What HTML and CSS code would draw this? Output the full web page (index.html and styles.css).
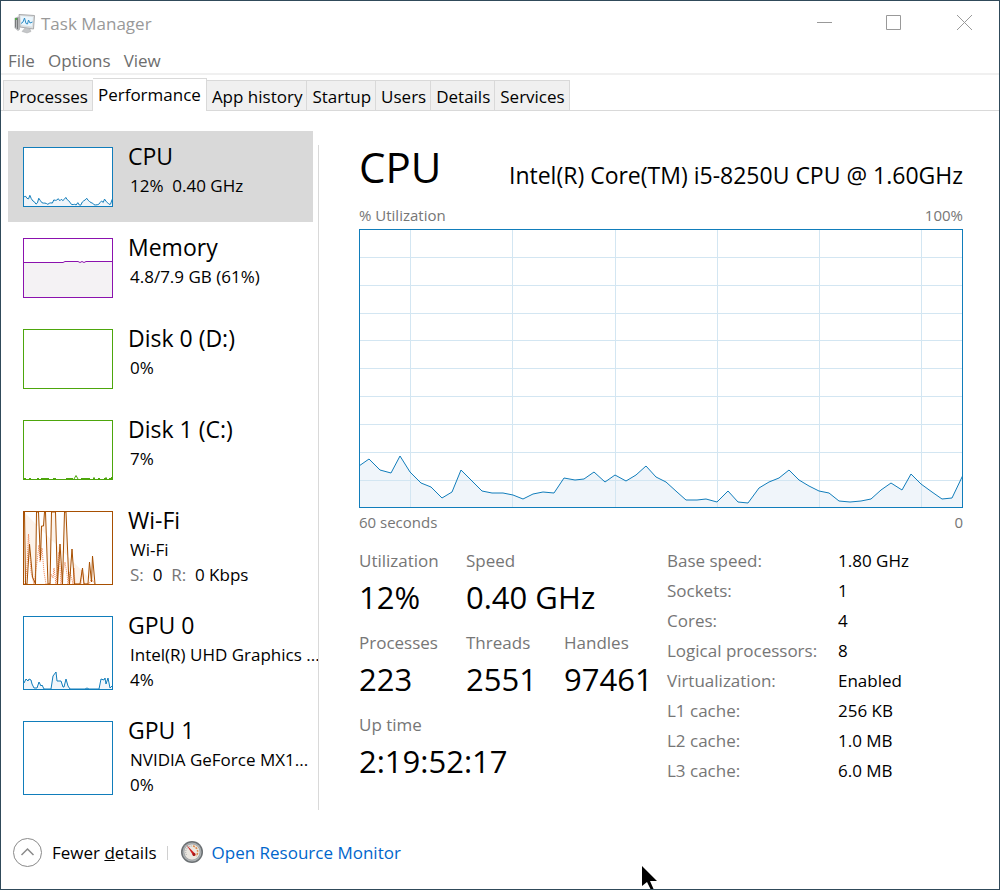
FILE: index.html
```html
<!DOCTYPE html>
<html lang="en">
<head>
<meta charset="UTF-8">
<meta name="viewport" content="width=device-width, initial-scale=1.0">
<title>Task Manager</title>
<link rel="stylesheet" href="styles.css">
</head>
<body>

<div class="window">

<header class="titlebar">
  <svg class="app-icon" width="22" height="20" viewBox="0 0 22 20">
    <path d="M0.500 4L4 2.500L6 3.500V15.500L4 17L0.500 14Z" fill="#b5b7b9"/>
    <path d="M1.500 4.500V13.500M3.500 4V15" stroke="#77797b" stroke-width="1"/>
    <rect x="1" y="4" width="2" height="2" fill="#57a84f"/>
    <path d="M5 0.500L20.500 1.500L19.500 15L6 13Z" fill="#dcdedf" stroke="#a9abad"/>
    <path d="M6.500 2L19 3L18 12.500L7.500 11Z" fill="#eaf6fd"/>
    <path d="M7 9.500L9 8L10.500 4L12 9.500L13.500 10L14.500 6L16 9L18.500 8" fill="none" stroke="#2d8cc6"/>
    <path d="M11 14L16 15L17 17.500L13 19L8 17.500Z" fill="#c4c6c8" stroke="#a9abad" stroke-width="0.500"/>
  </svg>
  <h1 class="title">Task Manager</h1>
  <div class="window-buttons">
    <button class="window-button" aria-label="Minimize"><svg width="17" height="17" viewBox="0 0 17 17"><path d="M1 7.500H16"/></svg></button>
    <button class="window-button" aria-label="Maximize"><svg width="17" height="17" viewBox="0 0 17 17"><path d="M0.500 0.500H14.500V14.500H0.500Z"/></svg></button>
    <button class="window-button" aria-label="Close"><svg width="17" height="17" viewBox="0 0 17 17"><path d="M1 0L16 15M16 0L1 15"/></svg></button>
  </div>
</header>

<nav class="menu">
  <button>File</button>
  <button>Options</button>
  <button>View</button>
</nav>

<div class="tabs" role="tablist">
  <button class="tab" role="tab">Processes</button>
  <button class="tab active" role="tab" aria-selected="true">Performance</button>
  <button class="tab" role="tab">App history</button>
  <button class="tab" role="tab">Startup</button>
  <button class="tab" role="tab">Users</button>
  <button class="tab" role="tab">Details</button>
  <button class="tab" role="tab">Services</button>
</div>

<div class="content">

<div class="sidebar">
  <button class="item selected">
    <svg class="thumb blue" viewBox="1 1 602 277" preserveAspectRatio="none">
      <use href="#cpu-area"/>
      <use href="#cpu-line"/>
    </svg>
    <span class="info">
      <span class="name">CPU</span>
      <span class="sub">12%&nbsp; 0.40 GHz</span>
    </span>
  </button>

  <button class="item">
    <svg class="thumb purple" viewBox="0 0 88 58" preserveAspectRatio="none">
      <path class="area" d="M0 23.500H39L41 22.500H54L56 23.500L58 22.500L60 23.500L62 22.500H88V58H0Z"/>
      <path class="line" d="M0 23.500H39L41 22.500H54L56 23.500L58 22.500L60 23.500L62 22.500H88"/>
    </svg>
    <span class="info">
      <span class="name">Memory</span>
      <span class="sub">4.8/7.9 GB (61%)</span>
    </span>
  </button>

  <button class="item">
    <svg class="thumb green" viewBox="0 0 88 58" preserveAspectRatio="none"></svg>
    <span class="info">
      <span class="name">Disk 0 (D:)</span>
      <span class="sub">0%</span>
    </span>
  </button>

  <button class="item">
    <svg class="thumb green" viewBox="0 0 88 58" preserveAspectRatio="none">
      <path class="line" d="M0 57.500H2M5 57.500H7M13 57.500H15M17 57.500H25M29 57.500H32M42 57.500H49M50 58L52 54.500L54 58M57 57.500H66M69 57.500H71M70 58V56M74 57.500H76M80 57.500H83M82 58V56M85 57.500H88M87.500 58V56"/>
    </svg>
    <span class="info">
      <span class="name">Disk 1 (C:)</span>
      <span class="sub">7%</span>
    </span>
  </button>

  <button class="item">
    <svg class="thumb tall brown" viewBox="0 0 88 72" preserveAspectRatio="none">
      <path class="area" d="M0 0L1 72H3L6 32L8 65L11 72L13 0H14L16 48L18 14H19L20 0H21L24 72H26L28 0H31L33 72L36 32L38 72L40 0H42L44 61L45 72L48 37L50 72H56L58 56L60 72H64L65 50L67 70L68 44L71 72Z"/>
      <path class="dotted" d="M1 72L3 55L4.500 22L7 60L10 72L13 50L15 33L16 50L18 36L20 60L22 72H26L27 62L29 66L30 56L32 72L35 40L37 72L39 60L41 50L43 62L44 72L46 60L49 72L50 56L51 72H57L58 58L60 72H65L67 68L69 69L71 72"/>
      <path class="line" d="M0.500 0L1.500 72H3L5.500 32L8.500 65L11.500 72L12.500 0H14.500L16.500 48L17.500 14H19.500L20.500 0H21.500L24 72H26L27.500 0H31.500L33.500 72L36 32L38.500 72L40.500 0H42L44.500 61L45.500 72L48 37L50.500 72H56L58.500 56L60 72H64L65.500 50L67.500 70L68.500 44L71 72"/>
    </svg>
    <span class="info">
      <span class="name">Wi-Fi</span>
      <span class="sub">Wi-Fi</span>
      <span class="sub"><span class="muted">S:</span>&nbsp; 0&nbsp; <span class="muted">R:</span>&nbsp; 0 Kbps</span>
    </span>
  </button>

  <button class="item">
    <svg class="thumb tall blue" viewBox="0 0 88 72" preserveAspectRatio="none">
      <path class="area" d="M0 66L2 62L7 63L10 71L13 71L15 65L17 69L20 72H27L29 59L32 55L33 64L37 64L39 70H40L42 62L44 69L46 72H61L63 71L65 72H75L77 62L80 63L81 61L82 67L84 61L86 71L88 69V72H0Z"/>
      <path class="line" d="M0 66L2 62L4 64L5 62L7 63L8 67L10 71L13 71L15 65L17 69L18 68L20 72H27L29 59L32 55L33 64L37 64L39 70H40L42 62L44 69L46 72H61L63 71L65 72H75L77 62L80 63L81 61L82 67L84 61L86 71L88 69"/>
    </svg>
    <span class="info">
      <span class="name">GPU 0</span>
      <span class="sub">Intel(R) UHD Graphics ...</span>
      <span class="sub">4%</span>
    </span>
  </button>

  <button class="item">
    <svg class="thumb tall blue" viewBox="0 0 88 72" preserveAspectRatio="none"></svg>
    <span class="info">
      <span class="name">GPU 1</span>
      <span class="sub">NVIDIA GeForce MX1...</span>
      <span class="sub">0%</span>
    </span>
  </button>
</div>

<main class="detail">
  <div class="heading">
    <h2>CPU</h2>
    <p>Intel(R) Core(TM) i5-8250U CPU @ 1.60GHz</p>
  </div>

  <div class="axis"><span>% Utilization</span><span>100%</span></div>
  <svg class="chart blue" viewBox="1 1 602 277" preserveAspectRatio="none">
    <path id="cpu-area" class="area" d="M0 237L10 230L21 241L32 244L41 227L51 243L62 254L72 258L83 269L93 263L102 241L113 252L123 262L133 264L144 264L154 266L164 270L174 265L184 263L195 264L205 249L216 251L225 250L235 243L246 253L256 246L267 252L277 246L287 237L297 248L307 253L318 263L327 271L338 271L347 270L358 273L369 262L379 273L389 274L400 259L410 253L420 249L430 241L440 251L450 257L460 262L470 264L480 272L491 273L502 272L512 270L522 261L532 254L543 261L552 245L562 255L573 263L583 270L593 269L604 246V279H0Z"/>
    <path class="grid" d="M51.500 0V279M153.500 0V279M256.500 0V279M358.500 0V279M460.500 0V279M562.500 0V279"/>
    <path class="grid" d="M0 28.500H604M0 56.500H604M0 84.500H604M0 111.500H604M0 139.500H604M0 167.500H604M0 195.500H604M0 223.500H604M0 251.500H604"/>
    <path id="cpu-line" class="line" d="M0 237L10 230L21 241L32 244L41 227L51 243L62 254L72 258L83 269L93 263L102 241L113 252L123 262L133 264L144 264L154 266L164 270L174 265L184 263L195 264L205 249L216 251L225 250L235 243L246 253L256 246L267 252L277 246L287 237L297 248L307 253L318 263L327 271L338 271L347 270L358 273L369 262L379 273L389 274L400 259L410 253L420 249L430 241L440 251L450 257L460 262L470 264L480 272L491 273L502 272L512 270L522 261L532 254L543 261L552 245L562 255L573 263L583 270L593 269L604 246"/>
  </svg>
  <div class="axis"><span>60 seconds</span><span>0</span></div>

  <div class="stats">
    <dl class="counters">
      <div><dt>Utilization</dt><dd>12%</dd></div>
      <div class="wide"><dt>Speed</dt><dd>0.40 GHz</dd></div>
      <div><dt>Processes</dt><dd>223</dd></div>
      <div><dt>Threads</dt><dd>2551</dd></div>
      <div><dt>Handles</dt><dd>97461</dd></div>
      <div class="full"><dt>Up time</dt><dd>2:19:52:17</dd></div>
    </dl>
    <dl class="specs">
      <dt>Base speed:</dt><dd>1.80 GHz</dd>
      <dt>Sockets:</dt><dd>1</dd>
      <dt>Cores:</dt><dd>4</dd>
      <dt>Logical processors:</dt><dd>8</dd>
      <dt>Virtualization:</dt><dd>Enabled</dd>
      <dt>L1 cache:</dt><dd>256 KB</dd>
      <dt>L2 cache:</dt><dd>1.0 MB</dd>
      <dt>L3 cache:</dt><dd>6.0 MB</dd>
    </dl>
  </div>
</main>

</div>

<footer class="footer">
  <button class="fewer">
    <svg width="30" height="30" viewBox="0 0 30 30" fill="none" stroke="#8a8a8a">
      <circle cx="15.500" cy="14.500" r="14"/>
      <path d="M9.500 17L15.500 11L21.500 17" stroke-width="1.500"/>
    </svg>
    <span>Fewer <u>d</u>etails</span>
  </button>
  <a class="monitor" href="#">
    <svg width="24" height="24" viewBox="0 0 24 24">
      <circle cx="12" cy="11" r="11" fill="#6b7073"/>
      <circle cx="12" cy="11" r="9.500" fill="#aeb3b5"/>
      <circle cx="12" cy="11" r="8" fill="#ebe7e0" stroke="#83878a" stroke-width="0.500"/>
      <path d="M6.500 14A6 6 0 0 1 12 5" fill="none" stroke="#9aa0a3" stroke-dasharray="1 1"/>
      <path d="M13 5A6 6 0 0 1 16 15" fill="none" stroke="#e08a4a" stroke-width="1.500" stroke-dasharray="2 1"/>
      <path d="M6.500 4L15.500 13L13.500 15Z" fill="#cf1f1f"/>
      <circle cx="14" cy="13.500" r="1.500" fill="#a81616"/>
    </svg>
    <span>Open Resource Monitor</span>
  </a>
</footer>

<svg class="pointer" width="17" height="24" viewBox="0 0 17 24">
  <path d="M1 0V20L6 16L10 24H13L9 15H16Z" fill="#000"/>
</svg>

</div>

</body>
</html>
```

FILE: styles.css
```css
* {
  box-sizing: border-box;
}

body {
  margin: 0;
  font-family: "Segoe UI", "Open Sans", sans-serif;
  font-size: 17px;
  line-height: 24px;
  color: #000;
  background-color: #fff;
}

h1, h2, p, dl, dd {
  margin: 0;
  font-weight: normal;
}

button {
  padding: 0;
  border: none;
  background: none;
  color: inherit;
  font: inherit;
  text-align: left;
  white-space: nowrap;
}

.window {
  position: relative;
  display: flex;
  flex-direction: column;
  min-height: 100vh;
  border: 1px solid #304a5a;
  overflow: hidden;
}

/* title bar and menu */
.titlebar {
  display: flex;
  align-items: center;
  gap: 5px;
  height: 45px;
  padding-left: 13px;
}

.title {
  flex: 1;
  font-size: 17px;
  color: #999;
}

.window-buttons {
  display: flex;
}

.window-button {
  display: flex;
  align-items: center;
  justify-content: center;
  width: 70px;
  height: 45px;
}

.window-button svg {
  fill: none;
  stroke: #999;
}

.menu {
  display: flex;
  gap: 13px;
  padding: 2px 7px 0;
  height: 29px;
  border-bottom: 2px solid #f0f0f0;
  color: #6d6d6d;
}

/* tabs */
.tabs {
  display: flex;
  align-items: flex-end;
  height: 36px;
  padding-left: 2px;
  border-bottom: 1px solid #d9d9d9;
}

.tab {
  height: 30px;
  padding: 2px 4px 0 5px;
  border: 1px solid #d9d9d9;
  border-width: 1px 1px 0 0;
  background-color: #f0f0f0;
}

.tab:first-child {
  border-left-width: 1px;
}

.tab.active {
  height: 33px;
  margin-bottom: -1px;
  padding: 0 5px;
  background-color: #fff;
}

.content {
  display: flex;
  padding-left: 7px;
}

/* resource list */
.sidebar {
  width: 305px;
  padding-top: 20px;
}

.item {
  display: flex;
  align-items: flex-start;
  gap: 15px;
  width: 100%;
  padding: 0 0 15px 15px;
}

.item.selected {
  background-color: #d9d9d9;
}

.thumb {
  flex: none;
  width: 90px;
  height: 60px;
  margin-top: 16px;
  border: 1px solid;
  background-color: #fff;
}

.thumb.tall {
  height: 74px;
}

.info {
  height: 76px;
  padding-top: 8px;
}

.name,
.sub {
  display: block;
}

.name {
  font-size: 23px;
  line-height: 34px;
}

.sub {
  padding-left: 2px;
  line-height: 25px;
}

.muted {
  color: #767676;
}

.line,
.dotted,
.grid {
  fill: none;
  stroke: currentColor;
  vector-effect: non-scaling-stroke;
}

.dotted {
  stroke: #f0824f;
  stroke-dasharray: 1 1;
}

.area {
  fill: #f0f5fa;
}

.grid {
  stroke: #d3e6f2;
}

.blue {
  color: #117dbb;
}

.purple {
  color: #8b12ae;
}

.purple .area {
  fill: #f4f2f4;
}

.green {
  color: #4da60c;
}

.brown {
  color: #a74f01;
}

.brown .area {
  fill: #fcf3eb;
}

/* detail pane */
.detail {
  position: relative;
  flex: 1;
  margin-left: 5px;
  padding: 24px 36px 0 41px;
}

.detail::before {
  content: "";
  position: absolute;
  top: 34px;
  bottom: 0;
  left: 0;
  border-left: 1px solid #d9d9d9;
}

.heading {
  display: flex;
  justify-content: space-between;
  align-items: flex-end;
  padding-bottom: 2px;
}

.heading h2 {
  font-size: 42px;
  line-height: 64px;
}

.heading p {
  font-size: 23px;
  line-height: 48px;
  white-space: nowrap;
}

.axis {
  display: flex;
  justify-content: space-between;
  font-size: 15px;
  line-height: 28px;
  color: #767676;
}

.chart {
  display: block;
  width: 100%;
  height: 279px;
  border: 1px solid;
}

.stats {
  display: flex;
  margin-top: 10px;
}

.stats dt {
  color: #767676;
  line-height: 30px;
}

.counters {
  display: grid;
  grid-template-columns: 107px 98px 103px;
  align-content: start;
  row-gap: 10px;
}

.counters dd {
  font-size: 31px;
  line-height: 42px;
}

.counters .wide {
  grid-column: span 2;
}

.counters .full {
  grid-column: span 3;
}

.specs {
  display: grid;
  grid-template-columns: 171px auto;
  align-content: start;
  line-height: 30px;
}

/* footer */
.footer {
  display: flex;
  align-items: center;
  padding: 28px 11px 20px;
}

.fewer,
.monitor {
  display: flex;
  align-items: center;
}

.fewer {
  gap: 10px;
}

.monitor {
  gap: 8px;
  padding-left: 12px;
  color: #0066cc;
  text-decoration: none;
}

.fewer::after {
  content: "";
  height: 14px;
  border-left: 1px solid #d0d0d0;
}

.pointer {
  position: absolute;
  left: 640px;
  bottom: -1px;
}
```
